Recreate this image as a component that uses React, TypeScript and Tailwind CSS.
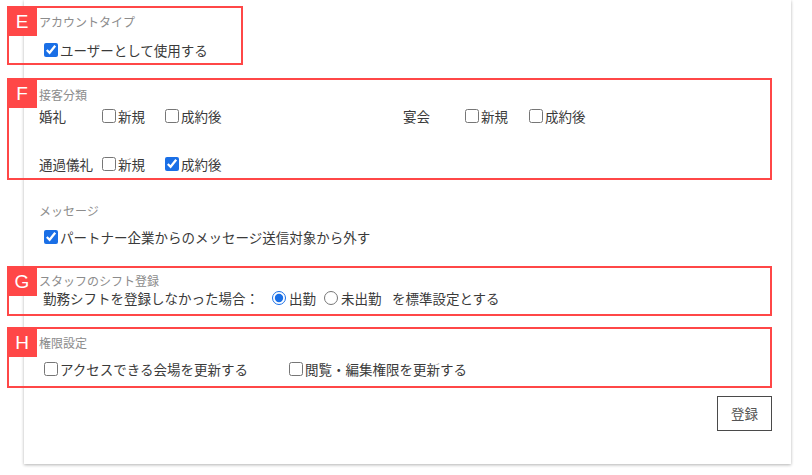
import React from "react";

const font = { fontFamily: '"Noto Sans CJK JP", "Noto Sans", sans-serif' };

function Overlay({ letter, wide }: { letter: string; wide?: boolean }) {
  return (
    <div
      className={
        "pointer-events-none absolute top-0 bottom-0 -left-[32px] border-2 border-[#ff4747] " +
        (wide ? "w-[765px]" : "w-[236px]")
      }
    >
      <div
        className="absolute -top-[2px] -left-[2px] flex h-[30px] w-[30px] items-center justify-center bg-[#ff4747] text-[19px] leading-none text-white"
        style={{ fontFamily: '"Liberation Sans", Arial, sans-serif' }}
      >
        {letter}
      </div>
    </div>
  );
}

function Check({ checked, label, className }: { checked?: boolean; label: string; className?: string }) {
  return (
    <label className={"flex items-center " + (className ?? "")}>
      <input
        type="checkbox"
        defaultChecked={checked}
        className="m-0 h-[14px] w-[14px] accent-[#1a6fe6]"
      />
      <span className="ml-[2px] whitespace-nowrap">{label}</span>
    </label>
  );
}

function Radio({ checked, label, className }: { checked?: boolean; label: string; className?: string }) {
  return (
    <label className={"flex items-center " + (className ?? "")}>
      <input
        type="radio"
        name="shift"
        defaultChecked={checked}
        className="m-0 h-[14px] w-[14px] accent-[#1a6fe6]"
      />
      <span className="ml-[3px] whitespace-nowrap">{label}</span>
    </label>
  );
}

export default function App() {
  return (
    <div className="h-[475px] w-[812px] bg-white" style={font}>
      <div className="ml-[24px] h-[464px] w-[767px] bg-white pl-[15px] pr-[15px] pt-[6px] text-[13.5px] text-[#3a3a3a] shadow-[0_1px_3px_rgba(0,0,0,0.3)]">
        {/* E */}
        <div className="relative h-[59px] pt-[8px]">
          <Overlay letter="E" />
          <div className="h-[16px] text-[12px] leading-[16px] text-[#8c8c8c]">アカウントタイプ</div>
          <div className="mt-[10px] flex h-[20px] items-center pl-[5px] leading-[20px]">
            <Check checked label="ユーザーとして使用する" />
          </div>
        </div>

        {/* F */}
        <div className="relative mt-[13px] h-[102px] pt-[9px]">
          <Overlay letter="F" wide />
          <div className="h-[16px] text-[12px] leading-[16px] text-[#8c8c8c]">接客分類</div>
          <div className="mt-[3px] flex h-[20px] items-center leading-[20px]">
            <div className="flex w-[364px] items-center">
              <span className="w-[63px]">婚礼</span>
              <Check label="新規" className="w-[63px]" />
              <Check label="成約後" />
            </div>
            <div className="flex items-center">
              <span className="w-[62px]">宴会</span>
              <Check label="新規" className="w-[64px]" />
              <Check label="成約後" />
            </div>
          </div>
          <div className="mt-[28px] flex h-[20px] items-center leading-[20px]">
            <span className="w-[63px]">通過儀礼</span>
            <Check label="新規" className="w-[63px]" />
            <Check checked label="成約後" />
          </div>
        </div>

        {/* Message */}
        <div className="mt-[23px]">
          <div className="h-[16px] text-[12px] leading-[16px] text-[#8c8c8c]">メッセージ</div>
          <div className="mt-[8px] flex h-[20px] items-center pl-[5px] leading-[20px]">
            <Check checked label="パートナー企業からのメッセージ送信対象から外す" />
          </div>
        </div>

        {/* G */}
        <div className="relative mt-[19px] h-[50px] pt-[9px]">
          <Overlay letter="G" wide />
          <div className="h-[12px] text-[12px] leading-[12px] text-[#8c8c8c]">スタッフのシフト登録</div>
          <div className="mt-[2px] flex h-[18px] items-center pl-[4px] leading-[18px]">
            <span className="w-[229px] whitespace-nowrap">勤務シフトを登録しなかった場合：</span>
            <Radio checked label="出勤" className="w-[52px]" />
            <Radio label="未出勤" className="w-[68px]" />
            <span className="whitespace-nowrap">を標準設定とする</span>
          </div>
        </div>

        {/* H */}
        <div className="relative mt-[11px] h-[61px] pt-[8px]">
          <Overlay letter="H" wide />
          <div className="h-[16px] text-[12px] leading-[16px] text-[#8c8c8c]">権限設定</div>
          <div className="mt-[8px] flex h-[20px] items-center pl-[5px] leading-[20px]">
            <Check label="アクセスできる会場を更新する" className="w-[245px]" />
            <Check label="閲覧・編集権限を更新する" />
          </div>
        </div>

        {/* Button */}
        <div className="mt-[8px] flex justify-end pr-[4px]">
          <button className="h-[35px] w-[55px] border border-[#4a4a4a] bg-white text-[13.5px] text-[#555]">
            登録
          </button>
        </div>
      </div>
    </div>
  );
}
